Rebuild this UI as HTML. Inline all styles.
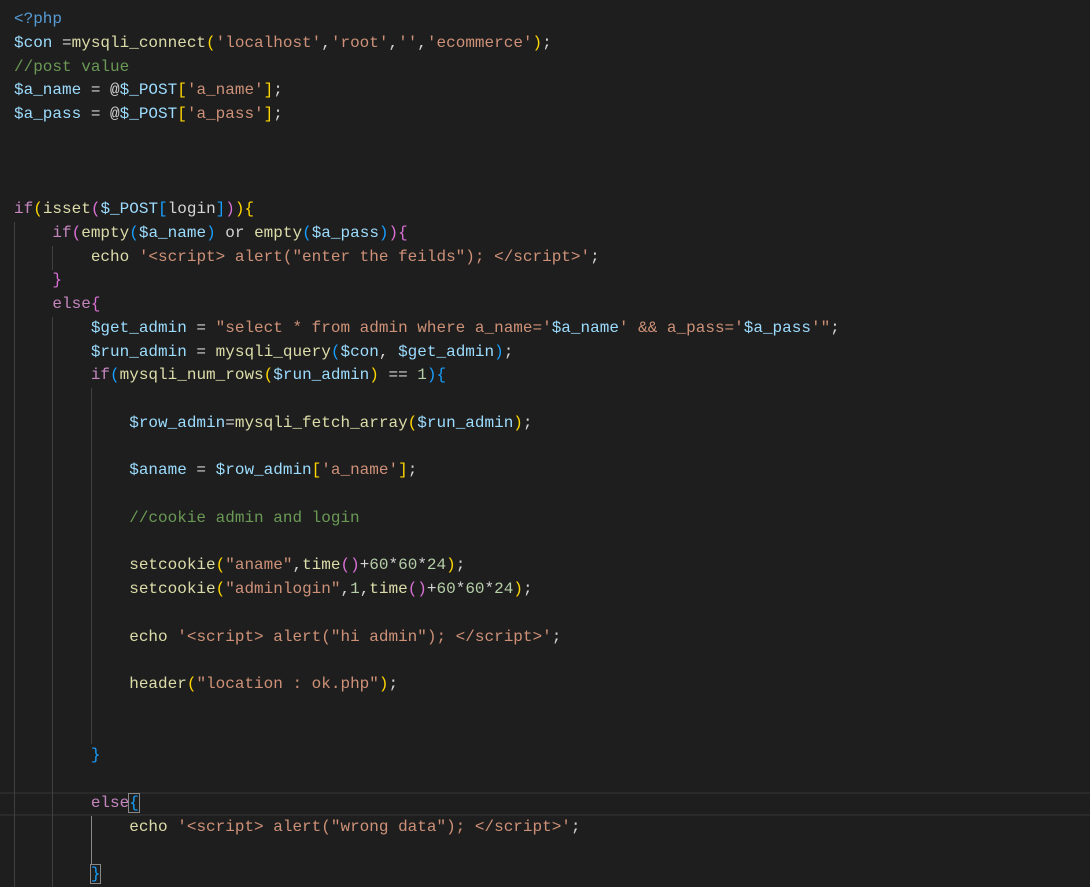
<!DOCTYPE html>
<html><head><meta charset="utf-8"><style>
html,body{margin:0;padding:0;background:#1e1e1e;width:1090px;height:887px;overflow:hidden}
#ed{position:relative;width:1090px;height:887px}
pre{margin:0;position:absolute;left:14px;top:8px;font-family:"Liberation Mono",monospace;font-size:16px;line-height:23.75px;color:#d4d4d4}
.v{color:#9cdcfe}.f{color:#dcdcaa}.k{color:#c586c0}.s{color:#ce9178}.c{color:#6a9955}.t{color:#569cd6}.n{color:#b5cea8}
.y{color:#ffd700}.p{color:#da70d6}.b{color:#179fff}
.g{position:absolute;width:1px;background:#404040}
.cur{position:absolute;left:0;width:1090px;top:792px;height:20px;border-top:2px solid #2a2a2a;border-bottom:2px solid #2a2a2a}
.bm{outline:1px solid #888;}
</style></head><body><div id="ed">
<div class="cur"></div>
<div class="g" style="left:14px;top:222px;height:667px"></div>
<div class="g" style="left:52px;top:246px;height:24px"></div>
<div class="g" style="left:52px;top:317px;height:572px"></div>
<div class="g" style="left:91px;top:388px;height:356px"></div>
<div class="g" style="left:91px;top:816px;height:48px;background:#8a8a8a"></div>
<pre><span class="t">&lt;?php</span>
<span class="v">$con</span> =<span class="f">mysqli_connect</span><span class="y">(</span><span class="s">'localhost'</span>,<span class="s">'root'</span>,<span class="s">''</span>,<span class="s">'ecommerce'</span><span class="y">)</span>;
<span class="c">//post value</span>
<span class="v">$a_name</span> = @<span class="v">$_POST</span><span class="y">[</span><span class="s">'a_name'</span><span class="y">]</span>;
<span class="v">$a_pass</span> = @<span class="v">$_POST</span><span class="y">[</span><span class="s">'a_pass'</span><span class="y">]</span>;



<span class="k">if</span><span class="y">(</span><span class="f">isset</span><span class="p">(</span><span class="v">$_POST</span><span class="b">[</span>login<span class="b">]</span><span class="p">)</span><span class="y">){</span>
    <span class="k">if</span><span class="p">(</span><span class="f">empty</span><span class="b">(</span><span class="v">$a_name</span><span class="b">)</span> or <span class="f">empty</span><span class="b">(</span><span class="v">$a_pass</span><span class="b">)</span><span class="p">){</span>
        <span class="f">echo</span> <span class="s">'&lt;script&gt; alert("enter the feilds"); &lt;/script&gt;'</span>;
    <span class="p">}</span>
    <span class="k">else</span><span class="p">{</span>
        <span class="v">$get_admin</span> = <span class="s">"select * from admin where a_name='</span><span class="v">$a_name</span><span class="s">' &amp;&amp; a_pass='</span><span class="v">$a_pass</span><span class="s">'"</span>;
        <span class="v">$run_admin</span> = <span class="f">mysqli_query</span><span class="b">(</span><span class="v">$con</span>, <span class="v">$get_admin</span><span class="b">)</span>;
        <span class="k">if</span><span class="b">(</span><span class="f">mysqli_num_rows</span><span class="y">(</span><span class="v">$run_admin</span><span class="y">)</span> == <span class="n">1</span><span class="b">){</span>

            <span class="v">$row_admin</span>=<span class="f">mysqli_fetch_array</span><span class="y">(</span><span class="v">$run_admin</span><span class="y">)</span>;

            <span class="v">$aname</span> = <span class="v">$row_admin</span><span class="y">[</span><span class="s">'a_name'</span><span class="y">]</span>;

            <span class="c">//cookie admin and login</span>

            <span class="f">setcookie</span><span class="y">(</span><span class="s">"aname"</span>,<span class="f">time</span><span class="p">()</span>+<span class="n">60</span>*<span class="n">60</span>*<span class="n">24</span><span class="y">)</span>;
            <span class="f">setcookie</span><span class="y">(</span><span class="s">"adminlogin"</span>,<span class="n">1</span>,<span class="f">time</span><span class="p">()</span>+<span class="n">60</span>*<span class="n">60</span>*<span class="n">24</span><span class="y">)</span>;

            <span class="f">echo</span> <span class="s">'&lt;script&gt; alert("hi admin"); &lt;/script&gt;'</span>;

            <span class="f">header</span><span class="y">(</span><span class="s">"location : ok.php"</span><span class="y">)</span>;


        <span class="b">}</span>

        <span class="k">else</span><span class="b bm">{</span>
            <span class="f">echo</span> <span class="s">'&lt;script&gt; alert("wrong data"); &lt;/script&gt;'</span>;

        <span class="b bm">}</span></pre>
</div></body></html>
